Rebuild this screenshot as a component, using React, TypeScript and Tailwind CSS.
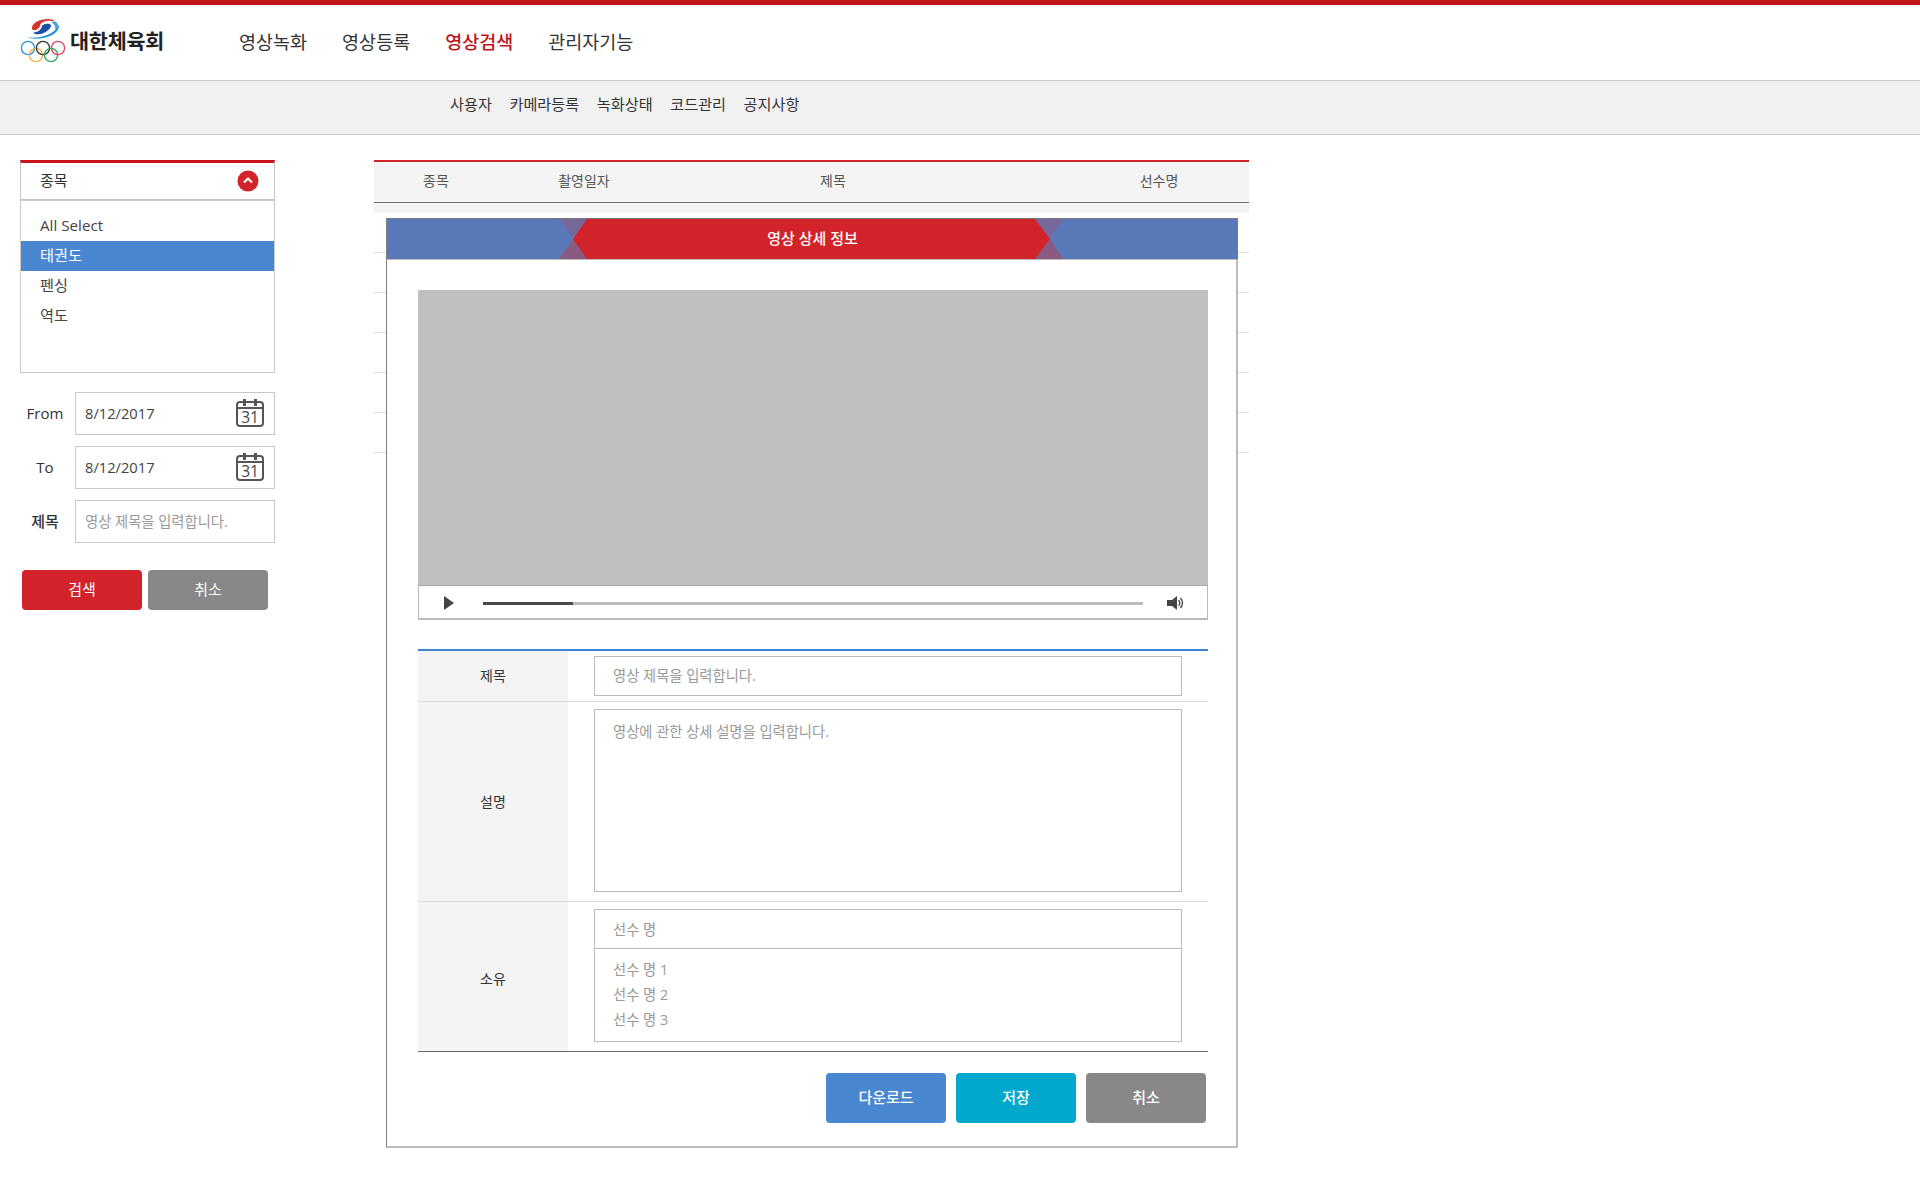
import React from "react";

const Cal = () => (
  <svg width="30" height="31" viewBox="0 0 30 31" className="shrink-0">
    <rect x="2" y="4" width="26" height="24" rx="3" fill="none" stroke="#555" strokeWidth="2" />
    <line x1="2" y1="10" x2="28" y2="10" stroke="#555" strokeWidth="2" />
    <rect x="8" y="1" width="3" height="7" fill="#555" />
    <rect x="19" y="1" width="3" height="7" fill="#555" />
    <text x="15" y="25" textAnchor="middle" fontSize="15.5" fill="#444" fontFamily="Open Sans, sans-serif">31</text>
  </svg>
);

const Logo = () => (
  <svg width="50" height="54" viewBox="0 0 50 54" className="absolute left-[18px] top-[7px]">
    <g transform="translate(0 4.5) scale(1 0.83)">
      <path d="M9 25 C18 27 36 24 41 10 C42 20 30 26 22 26.5 C16 27 11 26.5 9 25Z" fill="#1e90d8" />
      <path d="M14 15 C13 8 22 3 30 3 C33 3 36 4 37 6 C30 4 23 6 22 11 C21 16 15 18 14 15Z" fill="#d9342b" />
      <path d="M16 19 C20 19 24 15 24 11 C27 8 33 8 33 11 C33 15 26 21 20 21.5 C17 22 15 20 16 19Z" fill="#1f4fa0" />
      <path d="M37 6 C41 8 41 13 37 17 C38 13 37 9 33 7Z" fill="#3aa3e0" />
    </g>
    <circle cx="10" cy="36" r="6.6" fill="none" stroke="#2d8fd5" strokeWidth="1.3" />
    <circle cx="18" cy="43" r="6.6" fill="none" stroke="#f5b23c" strokeWidth="1.3" />
    <circle cx="25" cy="36" r="6.6" fill="none" stroke="#333" strokeWidth="1.3" />
    <circle cx="33" cy="43" r="6.6" fill="none" stroke="#2aa85a" strokeWidth="1.3" />
    <circle cx="40" cy="36" r="6.6" fill="none" stroke="#e2465a" strokeWidth="1.3" />
  </svg>
);

const ribbon = (
  <svg viewBox="0 0 851 40" preserveAspectRatio="none" className="absolute left-0 top-0 w-[851px] h-[40px]">
    <rect width="851" height="40" fill="#5a79b9" />
    <polygon points="172,0 200,0 186,20" fill="#77689b" />
    <polygon points="172,40 200,40 186,20" fill="#8b5a82" />
    <polygon points="648,0 676,0 663,20" fill="#77689b" />
    <polygon points="648,40 676,40 663,20" fill="#8b5a82" />
    <polygon points="200,0 648,0 663,20 648,40 200,40 186,20" fill="#d3232a" />
  </svg>
);

const Btn = ({ c, w, h, t, size }: { c: string; w: string; h: string; t: string; size: string }) => (
  <div className={`flex items-center justify-center rounded-[4px] pb-[1px] text-white ${c} ${w} ${h} ${size}`}>{t}</div>
);

const DateRow = ({ label, value }: { label: string; value: string }) => (
  <div className="flex items-center h-[43px]">
    <div className="w-[50px] mr-[5px] text-center text-[15px] text-[#333]">{label}</div>
    <div className="w-[200px] h-[43px] border border-[#c8c8c8] flex items-center justify-between pl-[9px] pr-[9px] text-[14.7px] text-[#444]">
      <span className="-mt-[1px]">{value}</span>
      <Cal />
    </div>
  </div>
);

export default function App() {
  return (
    <div className="min-h-[1200px] bg-white font-['Open_Sans','Noto_Sans_CJK_KR',sans-serif] text-[#444]">
      <header className="relative h-[81px] border-t-[5px] border-b border-t-[#c1141b] border-b-[#cccccc] flex items-center">
        <Logo />
        <div className="absolute left-[70px] top-[21px] text-[20.7px] leading-[30px] font-bold text-[#222] tracking-[-0.2px]">대한체육회</div>
        <nav className="ml-[239px] flex gap-[35px] text-[18.5px] leading-[28px] -mt-[1px] text-[#333]">
          <span>영상녹화</span>
          <span>영상등록</span>
          <span className="text-[#c1141b] font-medium">영상검색</span>
          <span>관리자기능</span>
        </nav>
      </header>
      <div className="h-[54px] bg-[#f1f1f1] border-b border-[#cccccc] pl-[450px] pt-[11px] flex gap-[17.5px] text-[15.2px] leading-[24px] text-[#333]">
        <span>사용자</span>
        <span>카메라등록</span>
        <span>녹화상태</span>
        <span>코드관리</span>
        <span>공지사항</span>
      </div>

      <main className="flex items-start pt-[25px] pl-[20px]">
        <aside className="w-[255px] shrink-0">
          <div className="h-[40px] pb-[1px] border-t-[3px] border-x border-b border-t-[#c9141e] border-x-[#c4c4c4] border-b-[#c4c4c4] flex items-center justify-between pl-[19px] pr-[15px] text-[15px] text-[#333]">
            <span>종목</span>
            <svg width="22" height="22" viewBox="0 0 22 22">
              <circle cx="11" cy="11" r="10.5" fill="#d3232a" />
              <path d="M7 12.5 L11 8.5 L15 12.5" fill="none" stroke="#fff" strokeWidth="2.2" />
            </svg>
          </div>
          <div className="h-[173px] border border-[#c8c8c8] pt-[10px] text-[15.2px] text-[#444]">
            <div className="h-[30px] leading-[29px] pl-[19px]">All Select</div>
            <div className="h-[30px] leading-[29px] pl-[19px] bg-[#4a87d1] text-white">태권도</div>
            <div className="h-[30px] leading-[29px] pl-[19px]">펜싱</div>
            <div className="h-[30px] leading-[29px] pl-[19px]">역도</div>
          </div>
          <div className="mt-[19px] flex flex-col gap-[11px]">
            <DateRow label="From" value="8/12/2017" />
            <DateRow label="To" value="8/12/2017" />
            <div className="flex items-center h-[43px]">
              <div className="w-[50px] mr-[5px] text-center text-[15px] text-[#333] font-medium">제목</div>
              <div className="w-[200px] h-[43px] border border-[#c8c8c8] flex items-center pl-[9px] text-[14.3px] text-[#999]">영상 제목을 입력합니다.</div>
            </div>
          </div>
          <div className="mt-[27px] ml-[2px] flex gap-[6px]">
            <Btn c="bg-[#d3232a]" w="w-[120px]" h="h-[40px]" size="text-[15px]" t="검색" />
            <Btn c="bg-[#888888]" w="w-[120px]" h="h-[40px]" size="text-[15px]" t="취소" />
          </div>
        </aside>

        <section className="relative ml-[99px] w-[875px]">
          <div className="h-[43px] pb-[3px] border-t-2 border-b border-t-[#d3232a] border-b-[#707070] bg-[#f4f4f4] grid grid-cols-[124px_172px_326px_73px_180px] items-center text-center text-[14px] text-[#555]">
            <span>종목</span>
            <span>촬영일자</span>
            <span>제목</span>
            <span />
            <span>선수명</span>
          </div>
          <div className="h-[10px] bg-[#f4f4f4]" />
          <div className="flex flex-col">
            {[0, 1, 2, 3, 4, 5].map((i) => (
              <div key={i} className="h-[40px] border-b border-[#dddddd]" />
            ))}
          </div>

          <div className="absolute left-[12px] top-[58px] w-[852px] h-[930px] bg-white border-l border-r-2 border-b-2 border-l-[#808080] border-r-[#bbbbbb] border-b-[#bbbbbb] rounded-br-[2px]">
            <div className="relative -mr-[2px] h-[42px] pb-[2px] border-t border-t-[#777777] border-b border-b-[#bbbbbb] text-white flex items-center justify-center text-[15px] font-medium">
              {ribbon}
              <span className="relative">영상 상세 정보</span>
            </div>
            <div className="pl-[31px] pt-[30px] w-[821px]">
              <div className="w-[790px] border border-[#bbbbbb] border-t-0 border-b-2">
                <div className="h-[296px] bg-[#bfbfbf] -mx-[1px] border-b border-[#a8a8a8]" />
                <div className="h-[32px] pt-[2px] flex items-center">
                  <svg width="12" height="14" viewBox="0 0 12 14" className="ml-[24px]">
                    <polygon points="1,0 11,7 1,14" fill="#444" />
                  </svg>
                  <div className="ml-[28px] mt-[1px] w-[660px] h-[3px] bg-[#bbbbbb]">
                    <div className="w-[90px] h-[3px] bg-[#4a4a4a]" />
                  </div>
                  <svg width="18" height="14" viewBox="0 0 18 14" className="ml-[24px]">
                    <polygon points="0,4 5,4 10,0 10,14 5,10 0,10" fill="#444" />
                    <path d="M11.5 4 Q14 7 11.5 10" fill="none" stroke="#444" strokeWidth="1.3" />
                    <path d="M13.5 2 Q17.5 7 13.5 12" fill="none" stroke="#444" strokeWidth="1.3" />
                  </svg>
                </div>
              </div>

              <div className="mt-[29px] w-[790px] border-t-2 border-b border-t-[#3f83d3] border-b-[#666666] text-[14.3px]">
                <div className="flex h-[51px] border-b border-[#dddddd]">
                  <div className="w-[150px] pb-[1px] bg-[#f4f4f4] flex items-center justify-center text-[14px] text-[#333]">제목</div>
                  <div className="pl-[26px] pt-[5px]">
                    <div className="w-[588px] h-[40px] border border-[#bbbbbb] flex items-center pl-[18px] text-[#999]">영상 제목을 입력합니다.</div>
                  </div>
                </div>
                <div className="flex h-[200px] border-b border-[#dddddd]">
                  <div className="w-[150px] bg-[#f4f4f4] flex items-center justify-center text-[14px] text-[#333]">설명</div>
                  <div className="pl-[26px] pt-[7px]">
                    <div className="w-[588px] h-[183px] border border-[#bbbbbb] pl-[18px] pt-[12px] leading-[20px] text-[#999]">영상에 관한 상세 설명을 입력합니다.</div>
                  </div>
                </div>
                <div className="flex h-[149px]">
                  <div className="w-[150px] pt-[4px] bg-[#f4f4f4] flex items-center justify-center text-[14px] text-[#333]">소유</div>
                  <div className="pl-[26px] pt-[7px]">
                    <div className="w-[588px] h-[133px] border border-[#bbbbbb] text-[#999]">
                      <div className="h-[39px] pt-[1px] border-b border-[#bbbbbb] flex items-center pl-[18px]">선수 명</div>
                      <div className="pl-[18px] pt-[8px] leading-[25px]">
                        <div>선수 명 1</div>
                        <div>선수 명 2</div>
                        <div>선수 명 3</div>
                      </div>
                    </div>
                  </div>
                </div>
              </div>

              <div className="mt-[21px] w-[788px] flex justify-end gap-[10px]">
                <Btn c="bg-[#4a87d1]" w="w-[120px]" h="h-[50px]" size="text-[15px] font-medium" t="다운로드" />
                <Btn c="bg-[#00a9cc]" w="w-[120px]" h="h-[50px]" size="text-[15px] font-medium" t="저장" />
                <Btn c="bg-[#888888]" w="w-[120px]" h="h-[50px]" size="text-[15px] font-medium" t="취소" />
              </div>
            </div>
          </div>
        </section>
      </main>
    </div>
  );
}
